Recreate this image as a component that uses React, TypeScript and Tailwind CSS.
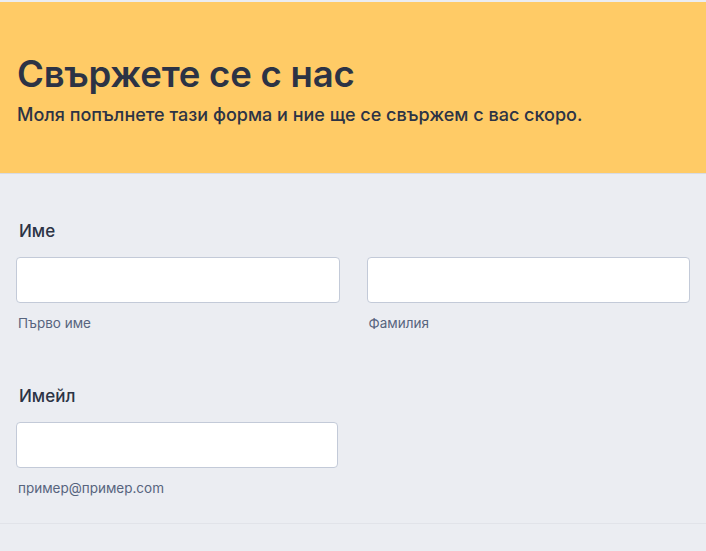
export default function App() {
  return (
    <div className="min-h-screen bg-[#ebedf2] pt-[2px] font-['Inter','Noto_Sans',sans-serif] text-[#2c3345]">
      {/* Header */}
      <div className="h-[172px] border-b border-[#d8dbe3] bg-[#ffcb66] px-[17px] pt-[50px]">
        <h1 className="text-[36.5px] font-semibold leading-[44px] tracking-[-0.2px]">Свържете се с нас</h1>
        <p className="mt-[7px] text-[18px] font-medium leading-[24px]">
          Моля попълнете тази форма и ние ще се свържем с вас скоро.
        </p>
      </div>

      {/* Name */}
      <div className="px-[16px] pt-[45px]">
        <label className="ml-[3px] block text-[17px] font-medium leading-[24px]">Име</label>
        <div className="mt-[14px] grid grid-cols-2 gap-[27px]">
          <div>
            <input className="h-[46px] w-full rounded-[4px] border border-[#c3cad8] bg-white px-3 outline-none" />
            <div className="ml-[2px] mt-[11px] text-[13.5px] leading-[18px] text-[#57647e]">Първо име</div>
          </div>
          <div>
            <input className="h-[46px] w-full rounded-[4px] border border-[#c3cad8] bg-white px-3 outline-none" />
            <div className="ml-[2px] mt-[11px] text-[13.5px] leading-[18px] text-[#57647e]">Фамилия</div>
          </div>
        </div>
      </div>

      {/* Email */}
      <div className="border-b border-[#e1e3e9] px-[16px] pb-[26px] pt-[52px]">
        <label className="ml-[3px] block text-[17px] font-medium leading-[24px]">Имейл</label>
        <div className="mt-[14px] w-[322px]">
          <input className="h-[46px] w-full rounded-[4px] border border-[#c3cad8] bg-white px-3 outline-none" />
          <div className="ml-[2px] mt-[11px] text-[13.5px] leading-[18px] text-[#57647e]">пример@пример.com</div>
        </div>
      </div>
    </div>
  )
}
